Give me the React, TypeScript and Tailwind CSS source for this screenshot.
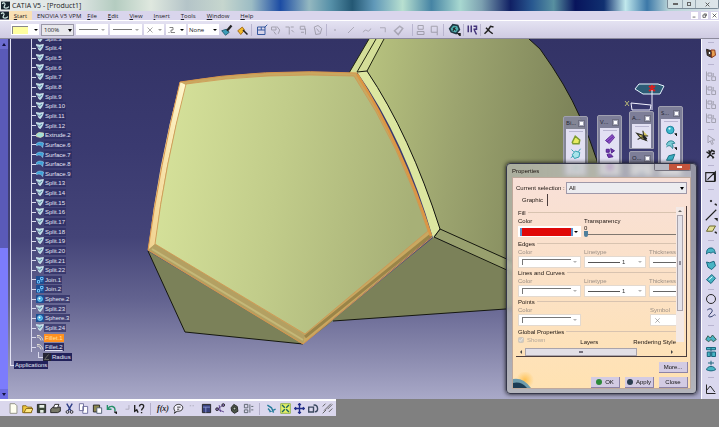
import React from "react";
import clsx from "clsx";

type TreeKind = "split" | "extrude" | "surface" | "join" | "sphere" | "fillet";

const TREE: { label: string; kind: TreeKind }[] = [
  { label: "Split.3", kind: "split" },
  { label: "Split.4", kind: "split" },
  { label: "Split.5", kind: "split" },
  { label: "Split.6", kind: "split" },
  { label: "Split.7", kind: "split" },
  { label: "Split.8", kind: "split" },
  { label: "Split.9", kind: "split" },
  { label: "Split.10", kind: "split" },
  { label: "Split.11", kind: "split" },
  { label: "Split.12", kind: "split" },
  { label: "Extrude.2", kind: "extrude" },
  { label: "Surface.6", kind: "surface" },
  { label: "Surface.7", kind: "surface" },
  { label: "Surface.8", kind: "surface" },
  { label: "Surface.9", kind: "surface" },
  { label: "Split.13", kind: "split" },
  { label: "Split.14", kind: "split" },
  { label: "Split.15", kind: "split" },
  { label: "Split.16", kind: "split" },
  { label: "Split.17", kind: "split" },
  { label: "Split.18", kind: "split" },
  { label: "Split.19", kind: "split" },
  { label: "Split.20", kind: "split" },
  { label: "Split.21", kind: "split" },
  { label: "Split.22", kind: "split" },
  { label: "Join.1", kind: "join" },
  { label: "Join.2", kind: "join" },
  { label: "Sphere.2", kind: "sphere" },
  { label: "Split.23", kind: "split" },
  { label: "Sphere.3", kind: "sphere" },
  { label: "Split.24", kind: "split" },
  { label: "Fillet.1", kind: "fillet" },
  { label: "Fillet.2", kind: "fillet" },
];

const MENU = ["File", "Edit", "View", "Insert", "Tools", "Window", "Help"];

function Icon({ children, size = "size-[12px]" }: { children: React.ReactNode; size?: string }) {
  return (
    <svg viewBox="0 0 16 16" className={clsx("shrink-0", size)} fill="none" stroke="#222" strokeWidth="1.3">
      {children}
    </svg>
  );
}

function TreeIcon({ kind }: { kind: TreeKind }) {
  return (
    <Icon size="size-[8px]">
      {kind === "split" && (
        <>
          <path d="M0 1l7 1 8-1-2 6-4 6-3-1-2-5z" fill="#b4dce6" stroke="#e6f4f8" />
          <path d="M3 5l4 3 5-4" stroke="#31587c" />
        </>
      )}
      {kind === "extrude" && <path d="M1 6l5-3 9 1v6l-6 3-8-2z" fill="#9fe0d8" stroke="#f0e9b0" />}
      {kind === "surface" && <path d="M1 5c5-4 9-3 14-1l-2 9c-2-5-6-6-12-4z" fill="#3aa0d8" stroke="#8fd4f4" />}
      {kind === "join" && (
        <>
          <rect x="0" y="0" width="16" height="16" fill="#1c4f94" stroke="none" />
          <path d="M3 9h4v5H3zM9 3h5v4H9zM9 10h4" stroke="#6fc0f8" strokeWidth="2" />
        </>
      )}
      {kind === "sphere" && (
        <>
          <rect x="0" y="0" width="16" height="16" fill="#1c4f94" stroke="none" />
          <circle cx="8" cy="8" r="5" fill="#3aa8e0" stroke="#90dcff" />
          <circle cx="7" cy="7" r="2" fill="#fff" stroke="none" />
        </>
      )}
      {kind === "fillet" && <path d="M2 3c6-1 10 3 12 10M2 6c5 0 7 3 8 7" stroke="#e9e6d8" strokeWidth="2" />}
    </Icon>
  );
}

function SpecTree() {
  return (
    <div className="absolute inset-y-0 left-[2px] overflow-hidden font-['Liberation_Sans',sans-serif] text-[6px] leading-[8px] text-[#e4e4f4]">
      <div className="border-l border-[#e4e4f4] pl-[20px]">
        <ul className="-mt-[5px] flex h-[318px] flex-col border-l border-[#d8d8ec]">
          {TREE.map((node) => (
            <li key={node.label} className="flex min-h-0 flex-1 items-center">
              <span className="h-px w-[4px] bg-[#d8d8ec]" />
              <TreeIcon kind={node.kind} />
              <span
                className={clsx(
                  "px-px",
                  node.label === "Fillet.1" && "bg-[#ff9020] text-[#ffe0a0]",
                  node.label === "Fillet.2" && "bg-[#2b2b60] underline",
                  node.label !== "Fillet.1" && node.label !== "Fillet.2" && "bg-[#2c2c62]/70"
                )}
              >
                {node.label}
              </span>
            </li>
          ))}
        </ul>
        <div className="ml-[7px] flex h-[9px] items-center">
          <span className="mb-[4px] h-[6px] w-[5px] border-b border-l border-[#d8d8ec]" />
          <Icon size="size-[8px]">
            <rect x="0" y="0" width="16" height="16" fill="#242434" stroke="none" />
            <path d="M3 13L11 3M3 13h9" stroke="#8a8a78" />
          </Icon>
          <span className="bg-[#22225a] px-px">Radius</span>
        </div>
      </div>
      <div className="flex h-[10px] items-start">
        <span className="h-[5px] w-[4px] border-b border-l border-[#e4e4f4]" />
        <span className="bg-[#22225a] px-px">Applications</span>
      </div>
    </div>
  );
}

function Model() {
  return (
    <svg viewBox="8 39 693 360" preserveAspectRatio="xMinYMin slice" className="absolute inset-0 h-full w-full">
      <defs>
        <linearGradient id="front" x1="0" y1="0" x2="1" y2="0.15">
          <stop offset="0" stopColor="#d8e49c" />
          <stop offset="0.5" stopColor="#c1cc8a" />
          <stop offset="1" stopColor="#a7b077" />
        </linearGradient>
        <linearGradient id="back" x1="0" y1="0" x2="1" y2="0.15">
          <stop offset="0" stopColor="#b8c37f" />
          <stop offset="0.4" stopColor="#9ca46f" />
          <stop offset="1" stopColor="#767c54" />
        </linearGradient>
        <linearGradient id="leftEdge" x1="0" y1="0" x2="1" y2="0">
          <stop offset="0" stopColor="#f0d08c" />
          <stop offset="1" stopColor="#fffad0" />
        </linearGradient>
      </defs>

      {/* rear sphere */}
      <path d="M383 39H529L540 49Q566 85 580 117Q600 160 606 200L600 310L507 308L440 229Q410 135 367 71Z" fill="url(#back)" />
      <path d="M529 39L540 49Q566 85 580 117Q600 160 606 200" fill="none" stroke="#15170f" />
      <path d="M434 237L507 271L600 305V302L333 321L303 344Z" fill="#7b8159" />
      <path d="M333 321L520 308" stroke="#15170f" />
      <path d="M440 229L520 265V276L434 237Z" fill="#98a06e" stroke="#15170f" />

      {/* top fold */}
      <path d="M349 73L369 39H384L367 71L357 73Z" fill="#d4de98" />
      <path d="M349 73L369 39M357 72L376 39M367 71L384 39" stroke="#20240f" />

      {/* side facets */}
      <path d="M148 251L185 332L303 344Z" fill="#7b8159" />
      <path d="M148 251L185 332L303 344" fill="none" stroke="#15170f" />
      <path d="M357 72L367 71Q410 135 440 229L433 238Q405 140 357 72Z" fill="#dce6a0" />
      <path d="M357 72L367 71Q410 135 440 229L434 237" fill="none" stroke="#15170f" />

      {/* front pentagon with its filleted border */}
      <path d="M180 82Q262 68 357 73Q402 145 432 236L303 344L148 250Q160 165 180 82Z" fill="#c9a860" />
      <path d="M180 82L186 85Q164 165 155 244L148 250Q158 165 180 82Z" fill="url(#leftEdge)" />
      <path d="M148 250L155 244L305 335L303 344Z" fill="#b3a062" />
      <path d="M152 249L303 340" stroke="#c4b878" strokeWidth="2" />
      <path d="M305 337L431 235" stroke="#9a8448" strokeWidth="3" />
      <path d="M186 84Q264 72 354 76Q400 145 428 231L305 334L155 244Q165 165 186 84Z" fill="url(#front)" stroke="#cf9450" strokeWidth="0.8" />
      <path d="M357 74Q402 145 431 236" fill="none" stroke="#dc9644" strokeWidth="2.5" />
      <path d="M180 82Q262 68 357 73M180 82Q160 165 148 250L303 344L432 237" fill="none" stroke="#d8954c" />

      {/* compass */}
      <path d="M639 84l19 0 6 2-4 8-17 0-8-5z" fill="#2d5c76" stroke="#e8f6ff" />
      <path d="M649 86l6 5M655 86l-6 5M652 85v6" stroke="#d42020" strokeWidth="2" />
      <path d="M652 90V110M631 103L651 105L650 110H632Z" fill="none" stroke="#f2f2ff" />
      <path d="M625 101l4 5M629 101l-4 5" stroke="#b8b878" />
    </svg>
  );
}

function PaletteWindow({ title, className, children }: { title: string; className: string; children: React.ReactNode }) {
  return (
    <div className={clsx("absolute flex w-[25px] flex-col rounded-t-xs border border-[#a0a0b0] bg-[#85869c]/90 px-[2px] font-['Open_Sans',sans-serif] text-[6px] text-[#20202c]", className)}>
      <div className="flex h-[12px] shrink-0 items-center justify-between">
        <span>{title}</span>
        <button aria-label="Close palette" className="flex size-[7px] items-center justify-center border border-[#6c6d80] bg-[#a6a7b8]">
          <span className="size-[3px] bg-white" />
        </button>
      </div>
      <div className="flex flex-1 flex-col items-center gap-[2px] overflow-hidden bg-[#e2e0f3] pt-[2px]">
        <span className="h-px w-[14px] shrink-0 bg-[#b9b6d2]" />
        {children}
      </div>
    </div>
  );
}

function Palettes() {
  return (
    <>
      <PaletteWindow title="Bi..." className="left-[555px] top-[77px] h-[60px]">
        <Icon><path d="M3 11L7 3l6 5-1 5H4z" fill="#e8ec60" stroke="#7e9c30" strokeWidth="2" /></Icon>
        <Icon><path d="M3 9l4-5 6 2-1 6-6 2zM2 2l3 3M14 1l-3 4M1 13l3-2" fill="#a9e4ea" stroke="#30a0b0" /></Icon>
        <Icon><path d="M3 9l6-5 4 6z" fill="#bfe6ea" stroke="#7abac4" /></Icon>
      </PaletteWindow>
      <PaletteWindow title="V..." className="left-[589px] top-[76px] h-[61px]">
        <Icon><path d="M2 10l9-8 3 4-7 8zM4 12l8-7" fill="#8e50c8" stroke="#5a2b94" /></Icon>
        <Icon><path d="M3 3h4v4H3zM9 2l5 3-4 3zM4 10c4-2 6 0 8 3l-6 1z" fill="#7335b0" stroke="#4d2388" /></Icon>
        <Icon><circle cx="8" cy="8" r="5" fill="#a050d0" stroke="#a86cd8" /></Icon>
      </PaletteWindow>
      <PaletteWindow title="A..." className="left-[621px] top-[72px] h-[38px]">
        <Icon size="size-[14px]">
          <path d="M2 5l7 2 4 6-6-2zM9 2l1 6 5 0M3 12l5-3" fill="#d4c45c" stroke="#34342c" />
          <path d="M9 8l4 4" strokeWidth="3" />
        </Icon>
      </PaletteWindow>
      <PaletteWindow title="O..." className="left-[621px] top-[112px] h-[25px]">
        <Icon><path d="M3 4h9v5H3z" fill="#8b9ac8" stroke="#6678a8" /></Icon>
      </PaletteWindow>
      <PaletteWindow title="S..." className="left-[650px] top-[67px] h-[70px]">
        <Icon><circle cx="7" cy="8" r="5" fill="#3cb8cc" stroke="#167e98" /><circle cx="6" cy="6" r="1.5" fill="#d8fbff" stroke="none" /><path d="M13 13h3v3z" fill="#111" /></Icon>
        <Icon><path d="M2 9c1-6 9-7 11-2l-4 1c2 1 2 4 1 6-2-4-5-5-8-2" fill="#7ccdd6" stroke="#287f90" /><path d="M13 13h3v3z" fill="#111" /></Icon>
        <Icon><path d="M2 11l3-6 8-2-3 8z" fill="#3aacc0" stroke="#1c7184" /></Icon>
      </PaletteWindow>
    </>
  );
}

function Heading({ children }: { children: React.ReactNode }) {
  return (
    <div className="flex h-[9px] items-center gap-[2px]">
      <h3>{children}</h3>
      <span className="h-px flex-1 bg-[#d8c3b0]" />
    </div>
  );
}

function FakeCombo({ label, children, className }: { label: string; children?: React.ReactNode; className?: string }) {
  return (
    <div className={clsx("shrink-0", className)}>
      <p className="h-[8px] text-[#9a8f86]">{label}</p>
      <button
        aria-label={label}
        className="flex h-[12px] w-full items-center border border-[#e3d9cf] bg-white pl-[3px] text-[#333]"
      >
        {children}
        <span className="ml-auto mr-[3px] border-x-2 border-t-2 border-x-transparent border-t-[#b4b4b4]" />
      </button>
    </div>
  );
}

const ColorSwatch = () => <span className="h-[6px] w-[49px] border-l border-t border-[#777]" />;

const LineSample = () => (
  <>
    <span className="h-px w-[32px] bg-[#555]" />
    <span className="ml-[2px] text-[6px]">1</span>
  </>
);

function LineSection({ title }: { title: string }) {
  return (
    <section>
      <Heading>{title}</Heading>
      <div className="flex gap-[3px]">
        <FakeCombo label="Color" className="w-[63px]"><ColorSwatch /></FakeCombo>
        <FakeCombo label="Linetype" className="w-[62px]"><LineSample /></FakeCombo>
        <div className="min-w-0 flex-1">
          <p className="h-[8px] text-[#9a8f86]">Thickness</p>
          <button aria-label={`${title} thickness`} className="flex h-[12px] w-full items-center border border-r-0 border-[#e3d9cf] bg-white pl-[3px]">
            <span className="h-px flex-1 bg-[#666]" />
          </button>
        </div>
      </div>
    </section>
  );
}

function DialogButton({ children, dot }: { children: React.ReactNode; dot?: string }) {
  return (
    <button className="flex h-[11px] w-[29px] items-center justify-center gap-[3px] border-b border-r border-[#8d83a6] bg-[#d3cbe3] text-[#111]">
      {dot && <span className={clsx("size-[6px] rounded-full", dot)} />}
      {children}
    </button>
  );
}

function PropertiesDialog() {
  return (
    <section
      aria-labelledby="properties-title"
      className="absolute left-[498px] top-[124px] w-[191px] rounded-[4px] border border-[#35374a] bg-[#b9bbb8]/70 px-[5px] pb-[4px] font-['Liberation_Sans',sans-serif] text-[6px] leading-[8px] text-[#1c1410] shadow-[0_0_4px_#111] backdrop-blur-[2px]"
    >
      <header className="flex h-[13px] items-center bg-linear-to-r from-transparent to-white/30">
        <h2 id="properties-title" className="flex-1">Properties</h2>
        <div className="flex self-start overflow-hidden rounded-b-xs border border-t-0 border-[#74727e]">
          <button aria-label="Help" className="h-[6px] w-[14px] bg-[#b7b8c2]" />
          <button aria-label="Close dialog" className="flex h-[6px] w-[21px] items-center justify-center bg-[#c4543c]">
            <span className="h-[2px] w-[5px] bg-[#ffe4d8]" />
          </button>
        </div>
      </header>

      <div className="relative flex h-[212px] flex-col overflow-hidden border border-[#bfa99c] bg-linear-to-b from-[#f8e0d8] to-[#ffe2b2] pl-[3px] pr-[2px] pt-[4px]">
        <div className="flex items-center gap-px pr-px">
          <label htmlFor="selection" className="w-[49px] whitespace-nowrap">Current selection :</label>
          <div className="relative flex-1">
            <select id="selection" className="block h-[12px] w-full appearance-none border border-[#9f98a8] bg-[#ececf0] px-[2px]">
              <option>All</option>
            </select>
            <span className="pointer-events-none absolute right-[3px] top-[5px] border-x-2 border-t-[3px] border-x-transparent border-t-black" />
          </div>
        </div>
        <div role="tablist" className="flex h-[13px] items-end pl-[2px]">
          <button role="tab" aria-selected="true" className="h-[12px] border-r border-[#4b3d3d] px-[4px]">Graphic</button>
        </div>

        <div className="mr-px border-b border-r border-[#4b3d3d] pl-[2px]">
          <div className="flex h-[136px] pt-[2px]">
            <div className="min-w-0 flex-1">
              <section>
                <Heading>Fill</Heading>
                <div className="flex h-[22px] gap-[3px]">
                  <div className="w-[63px]">
                    <p className="h-[9px]">Color</p>
                    <button aria-label="Fill color" className="flex h-[11px] w-full items-center justify-between bg-white px-[2px]">
                      <span className="h-[8px] w-[53px] border-x-2 border-[#5f8fc8] bg-[#e00808]" />
                      <span className="mr-px border-x-2 border-t-2 border-x-transparent border-t-black" />
                    </button>
                  </div>
                  <div className="min-w-0 flex-1">
                    <label htmlFor="transparency" className="block h-[8px]">Transparency</label>
                    <p className="h-[6px] leading-[6px]">0</p>
                    <input
                      id="transparency"
                      type="range"
                      defaultValue={0}
                      className="block h-[6px] w-full appearance-none bg-[linear-gradient(#807870,#807870)] bg-size-[100%_1px] bg-center bg-no-repeat [&::-webkit-slider-thumb]:h-[6px] [&::-webkit-slider-thumb]:w-[4px] [&::-webkit-slider-thumb]:appearance-none [&::-webkit-slider-thumb]:rounded-b-xs [&::-webkit-slider-thumb]:bg-[#4f7f9c]"
                    />
                  </div>
                </div>
              </section>
              <LineSection title="Edges" />
              <LineSection title="Lines and Curves" />
              <section>
                <Heading>Points</Heading>
                <div className="flex justify-between">
                  <FakeCombo label="Color" className="w-[63px]"><ColorSwatch /></FakeCombo>
                  <div className="w-[26px]">
                    <p className="h-[8px] text-[#9a8f86]">Symbol</p>
                    <button aria-label="Symbol" className="flex h-[12px] w-full items-center border border-r-0 border-[#e3d9cf] bg-white pl-[3px]">
                      <Icon size="size-[7px]"><path d="M3 3l10 10M13 3L3 13" stroke="#777" /></Icon>
                    </button>
                  </div>
                </div>
              </section>
            </div>
            <div className="-mt-px flex w-[8px] shrink-0 flex-col items-center bg-[#f3e9e6]">
              <span className="my-[3px] border-x-2 border-b-2 border-x-transparent border-b-[#666]" />
              <span className="flex h-[96px] w-[6px] items-center justify-center border border-[#aaa4ac] bg-[#e4e2e9]">
                <span className="h-[4px] w-[2px] bg-[#918d99]" />
              </span>
            </div>
            <span className="w-[2px]" />
          </div>
          <section className="-mt-[15px] mr-[10px]">
            <Heading>Global Properties</Heading>
            <div className="flex h-[10px] items-end justify-between">
              <label className="flex items-center gap-[3px] self-start text-[#b3a79b]">
                <input type="checkbox" defaultChecked disabled className="size-[6px]" />
                Shown
              </label>
              <span>Layers</span>
              <span>Rendering Style</span>
            </div>
          </section>
          <div className="mt-px flex h-[9px] items-center gap-[3px] pl-[2px]">
            <span className="border-y-2 border-r-2 border-y-transparent border-r-[#444]" />
            <span className="flex h-[8px] w-[112px] items-center justify-center border border-[#aaa4ac] bg-[#e2dfe6]">
              <span className="h-[2px] w-[4px] bg-[#77727e]" />
            </span>
            <span className="ml-auto mr-[13px] border-y-2 border-l-2 border-y-transparent border-l-[#444]" />
          </div>
        </div>

        <div className="mt-[5px] flex justify-end"><DialogButton>More...</DialogButton></div>
        <div className="mt-[4px] flex justify-end gap-[5px]">
          <DialogButton dot="bg-[#2c8a3a]">OK</DialogButton>
          <DialogButton dot="bg-[#2b3e50]">Apply</DialogButton>
          <DialogButton>Close</DialogButton>
        </div>
        <svg viewBox="0 0 24 16" className="absolute bottom-0 left-0 h-[16px] w-[24px]">
          <defs>
            <radialGradient id="sun">
              <stop offset="0" stopColor="#ffc050" />
              <stop offset="1" stopColor="#ffc860" stopOpacity="0" />
            </radialGradient>
          </defs>
          <circle cx="12" cy="8" r="9" fill="url(#sun)" />
          <path d="M0 7Q10 5 18 16H0z" fill="#6f9cac" />
          <path d="M0 11Q8 9 14 16H0z" fill="#1d3c54" />
        </svg>
      </div>
    </section>
  );
}

const TEAL = "#48b4c4";
const DEEP = "#17647c";

function SideSeparator({ className }: { className: string }) {
  return (
    <div className={clsx("flex w-full shrink-0 items-center justify-center", className)}>
      <span className="h-px w-[6px] bg-[#b8b4d0]" />
    </div>
  );
}

function SideButton({ label, faint, children }: { label: string; faint?: boolean; children: React.ReactNode }) {
  return (
    <button aria-label={label} className={clsx("flex h-[14px] w-full shrink-0 items-center justify-center", faint && "opacity-30")}>
      {children}
    </button>
  );
}

function SideToolbar() {
  return (
    <aside className="flex w-[18px] shrink-0 flex-col items-center overflow-hidden border-l border-white bg-[#dad8ee]">
      <SideSeparator className="h-[7px]" />
      <SideButton label="Catalog">
        <Icon><path d="M2 3l6 2 1 9-6-3z" fill="#5c3b28" /><path d="M8 4h5l1 7-5 3z" fill="#e8a050" stroke="#8a3a20" /><circle cx="6" cy="8" r="2" fill="#fff" /></Icon>
      </SideButton>
      <SideSeparator className="h-[9px]" />
      {["Publish", "Sew", "Sketch", "Workbench"].map((l) => (
        <SideButton key={l} label={l} faint>
          <Icon><path d="M2 2v12h5M4 4h5v4H4zM9 9h5v5H9zM11 4v4" /></Icon>
        </SideButton>
      ))}
      <SideSeparator className="h-[8px]" />
      <SideButton label="Select" faint><Icon><path d="M4 2v10l3-3 2 5 2-1-2-5h4z" /></Icon></SideButton>
      <SideButton label="Selection trap">
        <Icon><path d="M2 5l4 3 3-5 4 2M3 13l4-4 5 4M9 8l4-1M5 3l2 5M10 11l1 3" strokeWidth="2" /></Icon>
      </SideButton>
      <SideSeparator className="h-[9px]" />
      <SideButton label="Sketcher"><Icon size="size-[14px]"><path d="M2 3h10v10H2zM4 11L13 2v11" /></Icon></SideButton>
      <SideSeparator className="h-[10px]" />
      <SideButton label="Point"><Icon><circle cx="8" cy="8" r="1" fill="#222" /><path d="M13 12h2v2z" fill="#222" /></Icon></SideButton>
      <SideButton label="Line"><Icon size="size-[14px]"><path d="M2 14L14 2" /><path d="M13 12h2v2z" fill="#222" /></Icon></SideButton>
      <SideButton label="Plane"><Icon><path d="M2 11l4-7h8l-4 7z" fill="#e4e09a" stroke="#66642a" /><path d="M13 12h2v2z" fill="#222" /></Icon></SideButton>
      <SideSeparator className="h-[8px]" />
      <SideButton label="Extrude"><Icon><path d="M2 12c0-6 2-8 6-8s5 3 6 8c-2-3-4-3-6-1-2-2-4-1-6 1z" fill={TEAL} stroke={DEEP} /></Icon></SideButton>
      <SideButton label="Offset"><Icon><path d="M2 4l4 1 6-2 2 6-5 5-5-3z" fill={TEAL} stroke={DEEP} /></Icon></SideButton>
      <SideButton label="Sweep"><Icon><path d="M2 9l7-7 5 5-6 7z" fill={TEAL} stroke={DEEP} /><path d="M5 9l5-4" stroke="#dffaff" /></Icon></SideButton>
      <SideSeparator className="h-[6px]" />
      <SideButton label="Circle"><Icon><circle cx="8" cy="8" r="6" /></Icon></SideButton>
      <SideButton label="Spline"><Icon><path d="M3 4c5-4 9 0 5 4s-4 6 0 5 4-4 6-2" stroke="#2c3968" /></Icon></SideButton>
      <SideSeparator className="h-[11px]" />
      <SideButton label="Join"><Icon><path d="M1 10l3-5 3 3 3-4 5 6-4 3-3-3-3 3z" fill={TEAL} stroke="#355a50" /></Icon></SideButton>
      <SideButton label="Split"><Icon><path d="M2 2h12v3H2zM3 8h4v6H3zM9 8h5v6H9zM8 2v12" fill={TEAL} stroke={DEEP} /></Icon></SideButton>
      <SideButton label="Extract"><Icon><path d="M8 1v6M4 4h8M2 13c1-6 11-6 12 0-4 2-8 2-12 0z" fill={TEAL} stroke={DEEP} /></Icon></SideButton>
      <SideSeparator className="h-[9px]" />
      <SideButton label="Law"><Icon><path d="M2 2v12h12M2 10l5-6 6 8" /></Icon></SideButton>
    </aside>
  );
}

const Divider = () => <span className="h-[12px] w-px shrink-0 bg-[#b9b5cf]" />;

function LineCombo({ label }: { label: string }) {
  return (
    <button aria-label={label} className="flex h-[11px] w-[32px] items-center gap-[3px] bg-white px-[3px]">
      <span className="h-px w-[20px] bg-[#777]" />
      <span className="border-x-2 border-t-2 border-x-transparent border-t-[#aaa]" />
    </button>
  );
}

function TopToolbar() {
  return (
    <div className="flex h-[18px] items-center gap-[2px] border-b border-[#8c8a9c] bg-linear-to-b from-[#e4e2f2] to-[#cfcbe2] pl-[11px]">
      <button aria-label="Fill color" className="flex h-[11px] w-[28px] items-center justify-between bg-white px-px">
        <span className="h-[8px] w-[16px] border-l border-t border-[#888] bg-[#ffffa0]" />
        <span className="border-x-2 border-t-2 border-x-transparent border-t-black" />
      </button>
      <div className="relative w-[33px]">
        <select aria-label="Opacity" className="block h-[12px] w-full appearance-none border border-[#9a98a8] bg-[#e8e8ec] px-[2px]">
          <option>100%</option>
        </select>
        <span className="pointer-events-none absolute right-[2px] top-[5px] border-x-2 border-t-[3px] border-x-transparent border-t-black" />
      </div>
      <LineCombo label="Line weight" />
      <LineCombo label="Line type" />
      <button aria-label="Point symbol" className="flex h-[11px] w-[20px] items-center justify-between bg-white px-[2px]">
        <Icon size="size-[8px]"><path d="M3 3l10 10M13 3L3 13" stroke="#777" /></Icon>
        <span className="border-x-2 border-t-2 border-x-transparent border-t-[#999]" />
      </button>
      <button aria-label="Rendering" className="flex h-[11px] w-[20px] items-center justify-between bg-white px-[2px]">
        <Icon size="size-[8px]"><path d="M3 3h7v5H6v5h8M1 13h2" stroke="#444" /></Icon>
        <span className="border-x-2 border-t-2 border-x-transparent border-t-black" />
      </button>
      <div className="relative w-[31px]">
        <select aria-label="Layer" className="block h-[11px] w-full appearance-none bg-white px-px">
          <option>None</option>
        </select>
        <span className="pointer-events-none absolute right-[2px] top-[5px] border-x-2 border-t-2 border-x-transparent border-t-black" />
      </div>
      <button aria-label="Painter">
        <Icon><path d="M1 9l6-2 4 4-5 4z" fill="#3b9cb8" stroke="#2c6478" /><path d="M8 9l6-7" strokeWidth="3" /></Icon>
      </button>
      <button aria-label="Wizard" className="ml-[2px]">
        <Icon><path d="M1 9l6-5 3 4-5 6z" fill="#f0b828" stroke="#a87020" /><path d="M8 8l6 6" strokeWidth="2" /></Icon>
      </button>
      <Divider />
      <button aria-label="Capture" className="ml-[2px]">
        <Icon><path d="M2 4h10v10H2zM2 8h10M7 4v4M11 5l4-4" stroke="#31559c" /></Icon>
      </button>
      <div className="flex gap-[2px] opacity-30">
        <Icon><path d="M2 4h6v4H2zM9 3l4 5-2 5M5 10l3 4" /></Icon>
        <Icon><path d="M2 4h5v3M9 4h4M7 7v7M10 8l3 3" /></Icon>
        <Icon><path d="M3 3h6v4H3zM10 6v8M4 11h4" /></Icon>
        <Icon><path d="M3 4l5-2 5 4-2 7-6 1zM6 6l4 5" /></Icon>
      </div>
      <Divider />
      <div className="mr-[5px] flex gap-[4px] opacity-25">
        <Icon><path d="M8 7v2" strokeWidth="2" /></Icon>
        <Icon><path d="M4 12l8-8" /></Icon>
        <Icon><path d="M3 11c4-8 6 4 10-5" /></Icon>
        <Icon><path d="M4 5h7v6" /></Icon>
        <Icon><path d="M2 9l7-6 4 3-6 8z" strokeWidth="2" /></Icon>
      </div>
      <Divider />
      <div className="flex gap-[2px] opacity-30">
        <Icon><path d="M4 2h7v5H4zM3 10h9v4H3z" /></Icon>
        <Icon><path d="M3 3h8v8H3zM11 11v4" /></Icon>
      </div>
      <Divider />
      <button aria-label="Generate" className="ml-[2px]">
        <Icon size="size-[13px]"><path d="M2 7l4-5 6 1 2 5-4 5-6-2z" fill="#4fb0b0" stroke="#203844" strokeWidth="2" /><path d="M6 6l4 3M9 5l-3 5" /><path d="M12 13h3v3z" fill="#111" /></Icon>
      </button>
      <Divider />
      <button aria-label="Instantiate">
        <Icon><path d="M3 2v9M7 2v9M10 3h4v4h-4M11 8l3 6" stroke="#44347a" strokeWidth="2" /></Icon>
      </button>
      <Divider />
      <button aria-label="Axis">
        <Icon><path d="M2 13l5-5 3-5 4 1M4 5l5 5 4 3" strokeWidth="2" /></Icon>
      </button>
    </div>
  );
}

function BottomSlot({ label, faint, children }: { label: string; faint?: boolean; children: React.ReactNode }) {
  return (
    <button aria-label={label} className={clsx("flex w-[14px] shrink-0 justify-center", faint && "opacity-25")}>
      <Icon size="size-[11px]">{children}</Icon>
    </button>
  );
}

function BottomToolbar() {
  return (
    <footer className="flex h-[17px] w-[336px] items-center border-t-2 border-white bg-[#dad7ed] pl-[6px]">
      <BottomSlot label="New"><path d="M3 1h7l3 3v11H3z" fill="#fffff0" stroke="#8c8c80" /></BottomSlot>
      <BottomSlot label="Open"><path d="M1 4h5l2 2h6v8H1z" fill="#f0c83c" stroke="#826414" /><path d="M3 14l3-6h10l-3 6z" fill="#ffe884" stroke="#826414" /></BottomSlot>
      <BottomSlot label="Save"><path d="M2 2h12v12H2z" fill="#3b4838" /><path d="M5 3h7v4H5zM6 10h5v4H6z" fill="#e4ece4" stroke="none" /></BottomSlot>
      <BottomSlot label="Print"><path d="M1 9l3-3h11v6l-4 2H1z" fill="#777868" /><path d="M5 7l2-5h6l-2 5z" fill="#fff" /></BottomSlot>
      <BottomSlot label="Cut"><path d="M4 1l6 10M12 1L6 11" stroke="#2c3c84" strokeWidth="2" /><circle cx="5" cy="13" r="2" /><circle cx="11" cy="13" r="2" /></BottomSlot>
      <BottomSlot label="Copy"><path d="M2 1h6v10H2zM7 5h7v10H7z" fill="#fff" stroke="#686898" /></BottomSlot>
      <BottomSlot label="Paste"><path d="M2 3h9v10H2z" fill="#8c8750" /><path d="M7 7h7v8H7z" fill="#fff" stroke="#4c5a70" /></BottomSlot>
      <BottomSlot label="Undo"><path d="M2 3v6h6M3 8c3-5 11-4 10 4" stroke="#249068" strokeWidth="2" /><path d="M12 13h4v3z" fill="#111" /></BottomSlot>
      <BottomSlot label="Redo" faint><path d="M13 3v6H8" /></BottomSlot>
      <BottomSlot label="What's this"><path d="M1 3v9l3-2 2 4M8 5c0-4 7-4 6 0 0 3-3 3-3 6M11 13v2" strokeWidth="2" /></BottomSlot>
      <span className="mx-[4px] h-[12px] w-px bg-[#b3afca]" />
      <button aria-label="Formula" className="w-[16px] shrink-0 font-['Liberation_Serif',serif] text-[8px] font-bold italic leading-[12px] text-[#222]">f(x)</button>
      <BottomSlot label="Comment"><path d="M3 12c-4-5 0-10 5-10s8 4 5 8c-2 2-5 2-7 2l-4 3z" fill="#f4f2fc" /><path d="M6 6h5M6 9h3" /></BottomSlot>
      <BottomSlot label="Link" faint><path d="M4 4h2M8 4h2" /></BottomSlot>
      <BottomSlot label="Design table"><path d="M2 2h12v12H2z" fill="#38407c" /><path d="M3 6h10M7 6v8" stroke="#8c98d4" /></BottomSlot>
      <BottomSlot label="Knowledge"><path d="M3 9l9-6M3 9l10 4M6 3l2 10" stroke="#583c88" /><circle cx="12" cy="3" r="2" fill="#8c70c0" /><circle cx="3" cy="9" r="2" fill="#8c70c0" /></BottomSlot>
      <BottomSlot label="Lock"><path d="M3 7l4-5 5 3 1 7-5 3-4-3z" fill="#4b5548" /><circle cx="8" cy="8" r="2" fill="#bcc8b4" /></BottomSlot>
      <BottomSlot label="Equivalent"><path d="M2 2h5v5H2zM2 10h5v4H2zM10 2v12M12 5h3M12 10h3" stroke="#566068" /></BottomSlot>
      <span className="mx-[4px] h-[12px] w-px bg-[#b3afca]" />
      <BottomSlot label="Fly"><path d="M2 3l6 4 3 7M5 13l9-4M3 8l4 5" stroke="#267c9c" strokeWidth="2" /></BottomSlot>
      <BottomSlot label="Fit all"><path d="M1 1h14v14H1z" fill="#e4f068" stroke="#8cae48" /><path d="M3 3l4 4M13 3L9 7M3 13l4-4M13 13L9 9" stroke="#1c6460" strokeWidth="2" /></BottomSlot>
      <BottomSlot label="Pan"><path d="M8 1v14M1 8h14M6 3l2-2 2 2M6 13l2 2 2-2M3 6L1 8l2 2M13 6l2 2-2 2" stroke="#202c88" strokeWidth="2" /></BottomSlot>
      <BottomSlot label="Rotate"><path d="M1 6h7v7H1zM8 3c7-1 8 9 2 10" stroke="#3b4960" strokeWidth="2" /></BottomSlot>
      <BottomSlot label="Resize"><path d="M1 5l4-4M3 11L13 1M8 9l7-7M1 15l5-5M10 13l5-5" stroke="#555" /></BottomSlot>
    </footer>
  );
}

function CatiaMark() {
  return (
    <Icon size="size-[9px]">
      <rect x="0" y="1" width="16" height="14" fill="#18242c" stroke="none" />
      <path d="M2 5c4-4 7 0 4 4s5 5 8 1" stroke="#d8f0ec" strokeWidth="2" />
    </Icon>
  );
}

export default function App() {
  return (
    <div className="flex min-h-screen flex-col bg-[#808080] font-['Open_Sans',sans-serif] text-[6px] leading-[8px] text-[#1a1a24]">
      {/* Title bar */}
      <header className="flex h-[11px] items-center gap-[2px] bg-[linear-gradient(90deg,#e8ecec_0%,#dce4e2_11%,#b4ccc0_16%,#dfe8df_21%,#b4c4c8_26%,#c6d6ce_31%,#9cbcc4_35%,#1c4ca4_39%,#94b8c0_43%,#5690a8_46%,#245874_49%,#6098b8_52%,#b8e0d0_56%,#4684a4_60%,#a8d8d0_64%,#7ca0b0_67%,#102064_71%,#285890_74%,#5890a0_77%,#08145c_80%,#103070_84%,#c0e8ec_87%,#3c78a8_90%,#b8d4d8_93%,#dce4ea_100%)] pl-px">
        <CatiaMark />
        <h1 className="flex-1 text-[7px]">CATIA V5 - [Product1]</h1>
        <div className="flex h-[9px] self-start rounded-b-xs border border-t-0 border-[#7c8c98] bg-[#dfe6ea]/60 text-[#444c58]">
          <button aria-label="Minimize" className="flex w-[15px] items-center justify-center border-r border-[#9cabb4]"><span className="h-[2px] w-[5px] border border-[#666]" /></button>
          <button aria-label="Restore" className="flex w-[13px] items-center justify-center border-r border-[#9cabb4]"><span className="size-[4px] border border-[#666]" /></button>
          <button aria-label="Close" className="flex w-[22px] items-center justify-center"><Icon size="size-[5px]"><path d="M2 2l12 12M14 2L2 14" stroke="#555" strokeWidth="3" /></Icon></button>
        </div>
      </header>

      {/* Menu bar */}
      <nav className="flex h-[10px] items-center border-b border-white bg-[#d9d5ec]">
        <CatiaMark />
        <button className="h-[9px] w-[23px] bg-[#f9e0b4]"><u>S</u>tart</button>
        <button className="ml-[5px] mr-[6px] whitespace-nowrap">ENOVIA V5 VPM</button>
        <div className="flex flex-1 gap-[11px]">
          {MENU.map((item) => (
            <button key={item}><u>{item[0]}</u>{item.slice(1)}</button>
          ))}
        </div>
        <div className="flex gap-[3px] pr-px">
          {["Minimize document", "Restore document", "Close document"].map((label, i) => (
            <button key={label} aria-label={label} className="flex size-[7px] items-center justify-center bg-white">
              <Icon size="size-[5px]">
                <path d={["M2 13h9", "M3 6h8v8H3zM6 3h8v7", "M2 2l12 12M14 2L2 14"][i]} strokeWidth="2" />
              </Icon>
            </button>
          ))}
        </div>
      </nav>

      <TopToolbar />

      {/* Workspace */}
      <main className="flex h-[360px]">
        <div className="flex w-[8px] shrink-0 flex-col items-center justify-between bg-[linear-gradient(#5a5ab8_58%,#7c7cfc_58%)]">
          <button aria-label="Scroll up" className="flex h-[10px] w-full items-center justify-center bg-[#6c6cd0]"><span className="border-x-2 border-b-[3px] border-x-transparent border-b-[#101040]" /></button>
          <button aria-label="Scroll down" className="flex h-[10px] w-full items-center justify-center bg-[#6c6ce4]"><span className="border-x-2 border-t-[3px] border-x-transparent border-t-[#101040]" /></button>
        </div>
        <div className="relative min-w-0 flex-1 overflow-hidden bg-[linear-gradient(#333366_0%,#3a3a70_30%,#444478_55%,#62628f_72%,#8a8aae_88%,#a9a9c8_100%)]">
          <Model />
          <SpecTree />
          <Palettes />
          <PropertiesDialog />
        </div>
        <SideToolbar />
      </main>

      <BottomToolbar />
    </div>
  );
}
